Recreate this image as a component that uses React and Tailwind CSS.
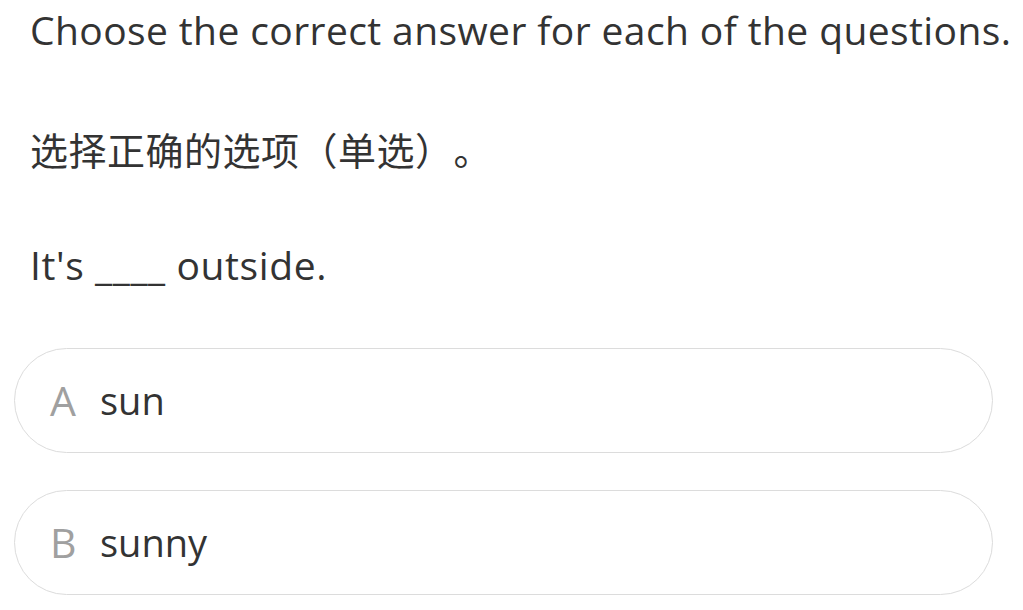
export default function App() {
  const options = [
    { key: 'A', text: 'sun' },
    { key: 'B', text: 'sunny' },
  ];

  return (
    <div
      className="w-[1023px] h-[610px] overflow-hidden bg-white text-[#333333]"
      style={{ fontFamily: '"Open Sans", "Noto Sans CJK SC", sans-serif' }}
    >
      <div className="pl-[30px] pt-[4px]">
        <p className="text-[39px] leading-[52px] tracking-[0.4px] whitespace-nowrap">
          Choose the correct answer for each of the questions.
        </p>
        <p className="mt-[68px] text-[38px] leading-[52px] tracking-[0.5px] whitespace-nowrap [text-spacing-trim:space-all]">
          选择正确的选项（单选）。
        </p>
        <p className="mt-[63px] text-[39px] leading-[52px] tracking-[0.6px]">
          It's ____ outside.
        </p>
      </div>

      <div className="mt-[57px] pl-[14px] pr-[30px] flex flex-col gap-[37px]">
        {options.map((o) => (
          <div
            key={o.key}
            className="h-[105px] rounded-full border border-[#dcdcdc] flex items-center pl-[35px]"
          >
            <span className="w-[50px] text-[41px] text-[#a0a0a0]">{o.key}</span>
            <span className="text-[38px]">{o.text}</span>
          </div>
        ))}
      </div>
    </div>
  );
}
